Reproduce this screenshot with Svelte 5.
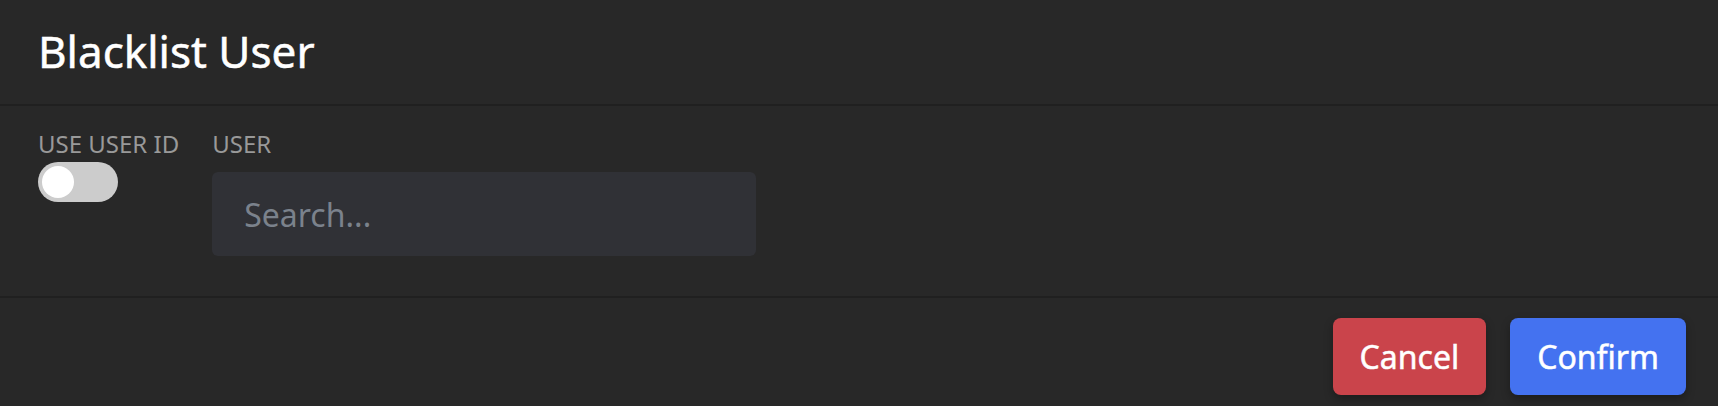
<script>
  let useUserId = $state(false);
  let user = $state('');
</script>

<section class="modal" aria-labelledby="modal-title">
  <header>
    <h1 id="modal-title">Blacklist User</h1>
  </header>
  <div class="body">
    <div class="field">
      <label for="use-id">USE USER ID</label>
      <input id="use-id" class="toggle" type="checkbox" bind:checked={useUserId} />
    </div>
    <div class="field user">
      <label for="user">USER</label>
      <input id="user" class="search" type="text" placeholder="Search..." bind:value={user} />
    </div>
  </div>
  <footer>
    <button class="cancel" type="button">Cancel</button>
    <button class="confirm" type="button">Confirm</button>
  </footer>
</section>

<style>
  :global(body) {
    background: #282828;
  }
  .modal {
    background: #282828;
    color: #fff;
    font-family: 'Noto Sans', sans-serif;
    font-size: 32px;
  }
  header {
    padding: 19px 38px 21px;
    border-bottom: 2px solid #202020;
  }
  h1 {
    margin: 0;
    font-size: 44px;
    line-height: 64px;
    font-weight: 400;
    -webkit-text-stroke: 0.5px #fff;
  }
  .body {
    display: flex;
    gap: 33px;
    padding: 22px 38px 40px;
    border-bottom: 2px solid #202020;
  }
  .field {
    display: flex;
    flex-direction: column;
    align-items: flex-start;
  }
  .user {
    flex: 0 1 544px;
  }
  label {
    color: #999;
    font-size: 24px;
    line-height: 32px;
    white-space: nowrap;
  }
  .toggle {
    appearance: none;
    box-sizing: border-box;
    width: 80px;
    height: 40px;
    margin: 2px 0 0;
    padding: 4px;
    border-radius: 20px;
    background: #ccc;
    cursor: pointer;
  }
  .toggle::before {
    content: '';
    display: block;
    width: 32px;
    height: 32px;
    border-radius: 50%;
    background: #fff;
    transition: transform 0.2s;
  }
  .toggle:checked {
    background: #4272f0;
  }
  .toggle:checked::before {
    transform: translateX(40px);
  }
  .search {
    box-sizing: border-box;
    width: 100%;
    height: 84px;
    margin: 12px 0 0;
    padding: 0 32px;
    border: 0;
    border-radius: 6px;
    background: #303136;
    color: #fff;
    font: inherit;
  }
  .search::placeholder {
    color: #7b828c;
    opacity: 1;
  }
  footer {
    display: flex;
    justify-content: flex-end;
    gap: 24px;
    padding: 20px 32px 11px;
  }
  button {
    height: 77px;
    padding: 0 27px;
    border: 0;
    border-radius: 8px;
    color: #fff;
    font: inherit;
    -webkit-text-stroke: 0.5px #fff;
    box-shadow: 0 4px 10px rgb(0 0 0 / 30%);
    cursor: pointer;
  }
  .cancel {
    background: #ca444b;
  }
  .confirm {
    background: #4472f0;
  }
</style>
